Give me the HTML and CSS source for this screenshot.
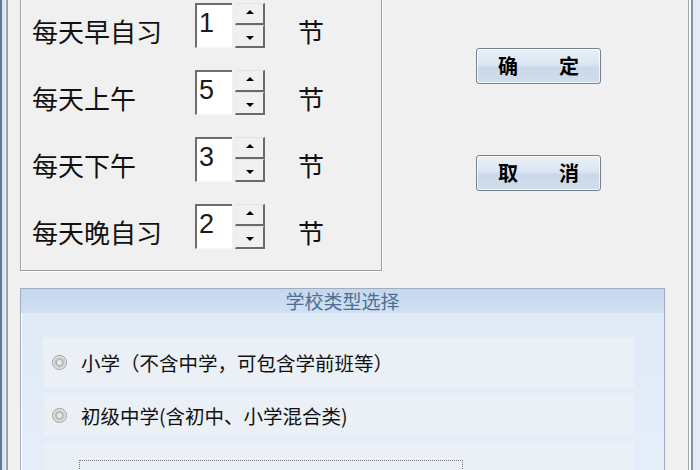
FILE: index.html
```html
<!DOCTYPE html>
<html lang="zh-CN">
<head>
<meta charset="utf-8">
<title>设置</title>
<link rel="stylesheet" href="styles.css">
</head>
<body>
<div class="window">
  <div class="frame-left"></div>
  <div class="content">
    <div class="top">
      <div class="groupbox">
        <div class="row">
          <span class="label">每天早自习</span>
          <div class="spin"><div class="edit">1</div><div class="btns"><div class="btn up"><i class="arr-up"></i></div><div class="btn down"><i class="arr-down"></i></div></div></div>
          <span class="unit">节</span>
        </div>
        <div class="row">
          <span class="label">每天上午</span>
          <div class="spin"><div class="edit">5</div><div class="btns"><div class="btn up"><i class="arr-up"></i></div><div class="btn down"><i class="arr-down"></i></div></div></div>
          <span class="unit">节</span>
        </div>
        <div class="row">
          <span class="label">每天下午</span>
          <div class="spin"><div class="edit">3</div><div class="btns"><div class="btn up"><i class="arr-up"></i></div><div class="btn down"><i class="arr-down"></i></div></div></div>
          <span class="unit">节</span>
        </div>
        <div class="row">
          <span class="label">每天晚自习</span>
          <div class="spin"><div class="edit">2</div><div class="btns"><div class="btn up"><i class="arr-up"></i></div><div class="btn down"><i class="arr-down"></i></div></div></div>
          <span class="unit">节</span>
        </div>
      </div>
      <div class="actions">
        <button class="cmd"><span>确</span><span>定</span></button>
        <button class="cmd"><span>取</span><span>消</span></button>
      </div>
    </div>
    <div class="panel">
      <div class="panel-head">学校类型选择</div>
      <div class="panel-body">
        <div class="opt opt1"><span class="radio"></span><span class="opt-text">小学（不含中学，可包含学前班等）</span></div>
        <div class="opt opt2"><span class="radio"></span><span class="opt-text">初级中学(含初中、小学混合类)</span></div>
        <div class="opt opt3"><span class="focus"></span></div>
      </div>
    </div>
  </div>
  <div class="frame-right"></div>
</div>
</body>
</html>
```

FILE: styles.css
```css
body {
  margin: 0;
  background: #f0f0f0;
  font-family: "Noto Sans CJK SC", "Noto Sans", sans-serif;
  color: #000;
}

.window {
  display: flex;
  width: 700px;
  height: 470px;
  overflow: hidden;
  background: #f0f0f0;
}

.frame-left {
  width: 8px;
  flex: none;
  background: linear-gradient(to right, #56789e 0 2px, #d9e3ee 2px 5px, #f6f3f4 5px 6.5px, #a0a0a0 6.5px 8px);
}

.frame-right {
  width: 12px;
  flex: none;
  background: linear-gradient(to right, #a8a8a8 0 1px, #fafafa 1px 3px, #8394a8 3px 5px, #e4ebf2 5px);
}

.content {
  flex: 1;
  min-width: 0;
}

.top {
  display: flex;
}

.groupbox {
  margin: -20px 0 0 12px;
  width: 362px;
  box-sizing: border-box;
  border: 1px solid #a0a0a0;
  box-shadow: inset 1px 1px 0 #fff, 1px 1px 0 #fff;
  padding: 22px 0 21px 11px;
  display: flex;
  flex-direction: column;
  gap: 22px;
}

.row {
  display: flex;
  align-items: center;
  height: 45px;
}

.label {
  width: 163px;
  flex: none;
  font-size: 26px;
  line-height: 26px;
  padding-top: 10px;
  color: #111;
}

.spin {
  display: flex;
  height: 45px;
}

.edit {
  width: 37px;
  box-sizing: border-box;
  border-top: 2px solid #6e6e6e;
  border-left: 2px solid #6e6e6e;
  border-bottom: 1px solid #f8f8f8;
  background: #fff;
  font-family: "Liberation Sans", Arial, sans-serif;
  font-size: 27px;
  line-height: 37px;
  padding-left: 2px;
  color: #1a1a1a;
}

.btns {
  margin-left: 3px;
  width: 30px;
  display: flex;
  flex-direction: column;
}

.btn {
  box-sizing: border-box;
  flex: 1;
  border-top: 1px solid #e2e2e2;
  border-left: 1px solid #ececec;
  border-right: 2px solid #6a6a6a;
  border-bottom: 2px solid #6a6a6a;
  background: #f0f0f0;
  display: flex;
  align-items: center;
  justify-content: center;
}

.btn.up {
  padding-bottom: 3px;
}

.btn.down {
  padding-top: 4px;
}

.arr-up {
  width: 0;
  height: 0;
  border-left: 4px solid transparent;
  border-right: 4px solid transparent;
  border-bottom: 4px solid #000;
}

.arr-down {
  width: 0;
  height: 0;
  border-left: 4px solid transparent;
  border-right: 4px solid transparent;
  border-top: 4px solid #000;
}

.unit {
  margin-left: 33px;
  font-size: 26px;
  line-height: 26px;
  padding-top: 10px;
  color: #111;
}

.actions {
  margin-left: 94px;
  padding-top: 48px;
  display: flex;
  flex-direction: column;
  gap: 71px;
}

.cmd {
  width: 125px;
  height: 36px;
  box-sizing: border-box;
  margin: 0;
  border: 1px solid #76838f;
  border-radius: 3px;
  box-shadow: inset 0 0 0 1px rgba(255, 255, 255, 0.75);
  background: linear-gradient(#e9f0f7, #dbe6f2 45%, #cad9ea 55%, #d0ddec);
  display: flex;
  justify-content: space-between;
  align-items: center;
  padding: 0 21px;
  font-family: "Noto Sans CJK SC", sans-serif;
  font-weight: bold;
  font-size: 20px;
  line-height: 20px;
  color: #000;
}

.panel {
  margin: 17px 0 0 12px;
  width: 645px;
  height: 200px;
  box-sizing: border-box;
  border: 1px solid #9fadbd;
  box-shadow: inset 1px 1px 0 #fff;
  background: linear-gradient(#dfeaf7, #e6eefa);
}

.panel-head {
  height: 24px;
  background: linear-gradient(#c3d7ee, #d1e1f3);
  text-align: center;
  font-size: 19px;
  line-height: 24px;
  color: #4f6e91;
}

.panel-body {
  padding: 25px 30px 0 23px;
  display: flex;
  flex-direction: column;
  gap: 7px;
}

.opt {
  display: flex;
  align-items: center;
  background: #ebeff6;
  box-shadow: 0 0 3px 1px rgba(235, 239, 246, 0.8);
  padding-left: 8px;
}

.opt1 {
  height: 49px;
}

.opt2 {
  height: 42px;
}

.opt3 {
  height: 60px;
  align-items: flex-start;
}

.radio {
  width: 15px;
  height: 15px;
  flex: none;
  box-sizing: border-box;
  border-radius: 50%;
  border: 1px solid #9c9c9c;
  background: radial-gradient(circle, #e9e9e9 0 2px, #b4b4b4 3px, #c9c9c9 4.5px, #eeeeee 6.5px);
}

.opt-text {
  margin-left: 14px;
  font-size: 19.5px;
  color: #111;
}

.focus {
  margin: 17px 0 0 27px;
  width: 382px;
  height: 40px;
  border-top: 1px dotted #777;
  border-left: 1px dotted #777;
  border-right: 1px dotted #777;
}
```
